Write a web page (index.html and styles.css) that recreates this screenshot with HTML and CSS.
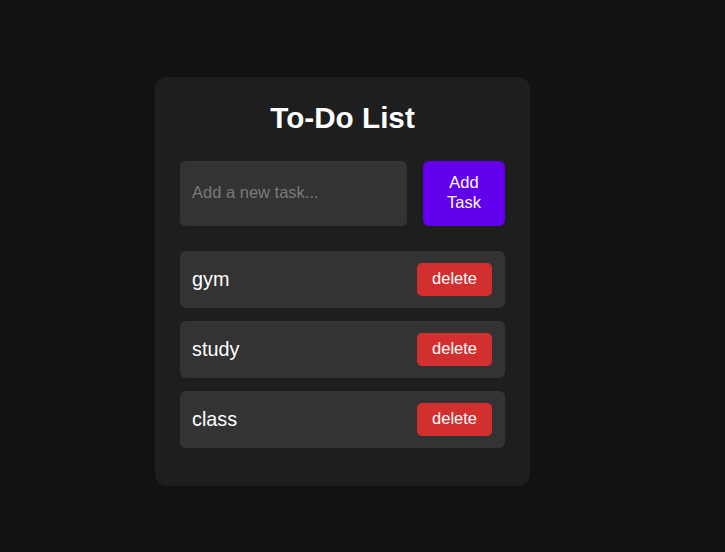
FILE: index.html
```html
<!DOCTYPE html>
<html lang="en">
<head>
<meta charset="utf-8">
<title>To-Do List</title>
<link rel="stylesheet" href="styles.css">
</head>
<body>
  <div class="card">
    <h1 class="title">To-Do List</h1>
    <div class="add-row">
      <input class="task-input" type="text" placeholder="Add a new task...">
      <button class="add-btn">Add Task</button>
    </div>
    <ul class="task-list">
      <li class="task"><span class="task-text">gym</span><button class="del-btn">delete</button></li>
      <li class="task"><span class="task-text">study</span><button class="del-btn">delete</button></li>
      <li class="task"><span class="task-text">class</span><button class="del-btn">delete</button></li>
    </ul>
  </div>
</body>
</html>
```
FILE: styles.css
```css
html, body {
  margin: 0;
  background: #121212;
}
body {
  padding: 77px 0 0 155px;
  min-height: 552px;
  box-sizing: border-box;
  font-family: "Liberation Sans", Arial, sans-serif;
  color: #ffffff;
}
.card {
  width: 375px;
  box-sizing: border-box;
  padding: 24px 25px 25px;
  background: #1e1e1e;
  border-radius: 12px;
}
.title {
  margin: 0 0 26px;
  font-size: 29.7px;
  line-height: 34px;
  font-weight: bold;
  text-align: center;
  color: #ffffff;
}
.add-row {
  display: flex;
  gap: 16px;
  margin-bottom: 25px;
}
.task-input {
  flex: 1;
  min-width: 0;
  margin: 0;
  padding: 0 12px 2px;
  border: none;
  border-radius: 5px;
  background: #333333;
  color: #ffffff;
  font-family: "Liberation Sans", Arial, sans-serif;
  font-size: 16.5px;
  outline: none;
}
.task-input::placeholder {
  color: #7a7a7a;
}
.add-btn {
  flex: 0 0 82px;
  width: 82px;
  box-sizing: border-box;
  margin: 0;
  padding: 10.5px 23px 14.5px;
  border: none;
  border-radius: 6px;
  background: #6200ee;
  color: #ffffff;
  font-family: "Liberation Sans", Arial, sans-serif;
  font-size: 16.5px;
  line-height: 20px;
  text-align: center;
}
.task-list {
  list-style: none;
  margin: 0;
  padding: 0;
}
.task {
  display: flex;
  align-items: center;
  justify-content: space-between;
  padding: 12px 13px 12px 12px;
  margin-bottom: 13px;
  background: #333333;
  border-radius: 6px;
}
.task-text {
  font-size: 19.8px;
  line-height: 23px;
}
.del-btn {
  margin: 0;
  padding: 6px 15px 8px;
  border: none;
  border-radius: 5px;
  background: #d32f2f;
  color: #ffffff;
  font-family: "Liberation Sans", Arial, sans-serif;
  font-size: 16.5px;
  line-height: 19px;
}
```
